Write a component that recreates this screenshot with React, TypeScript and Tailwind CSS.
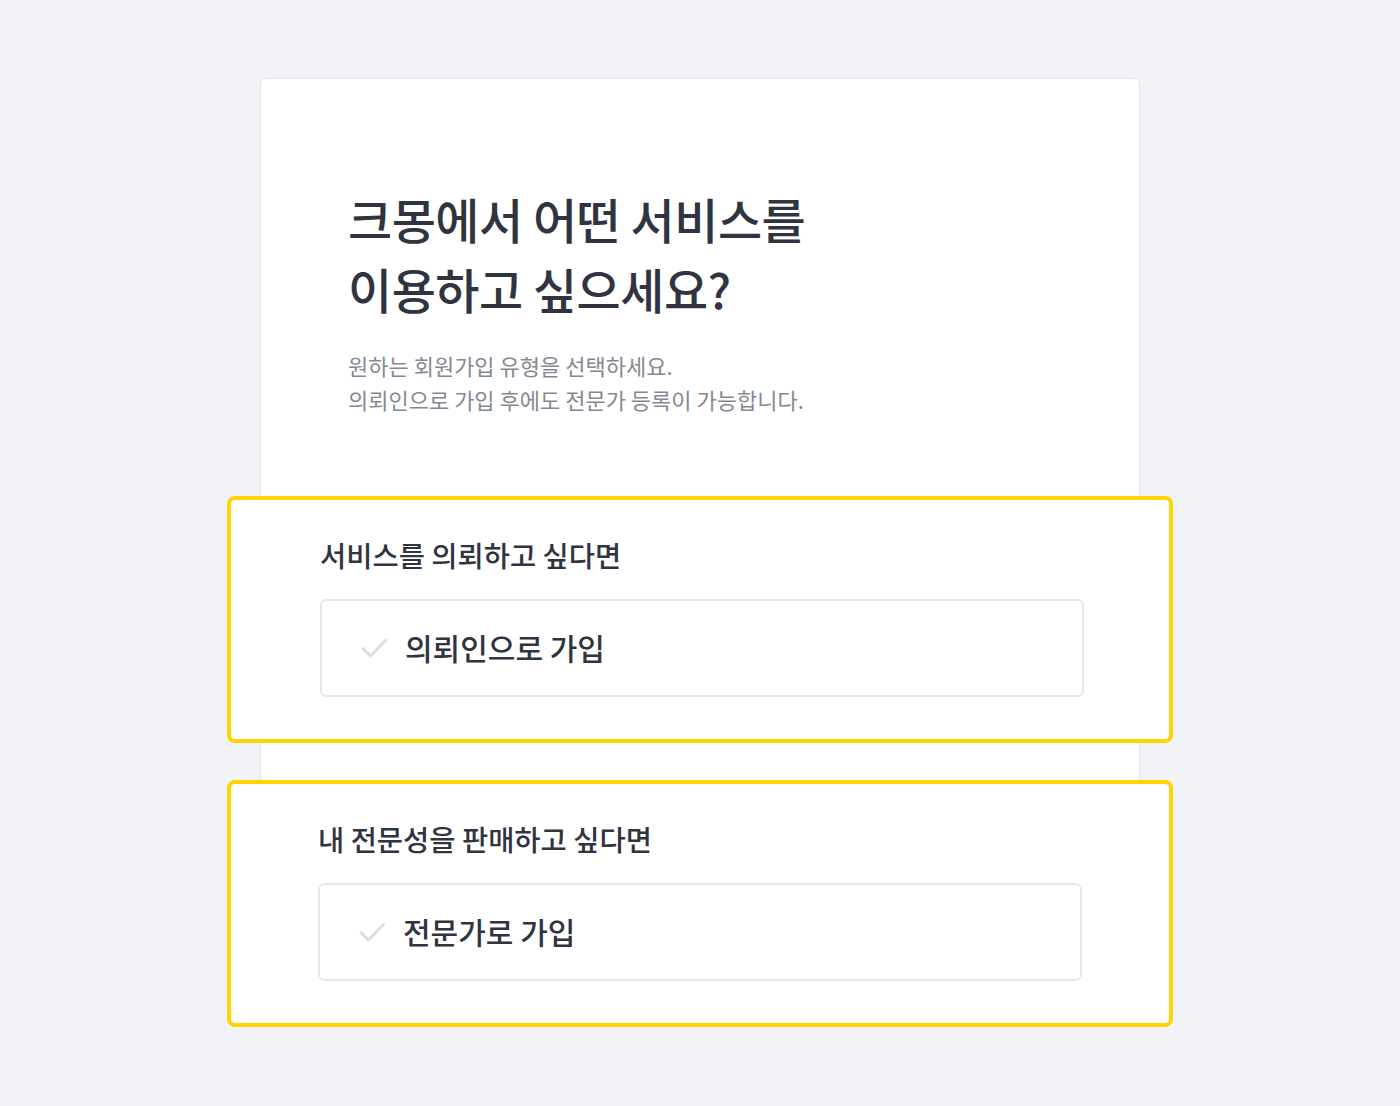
import React from "react";

function Check() {
  return (
    <svg width="28" height="28" viewBox="0 0 28 28" fill="none" className="shrink-0">
      <path d="M3 14.5 L10.5 22 L25.5 6.5" stroke="#dcdde5" strokeWidth="3" strokeLinecap="round" strokeLinejoin="round" />
    </svg>
  );
}

function Section({ label, button, shift }: { label: string; button: string; shift?: boolean }) {
  return (
    <div className="-mx-[121px] rounded-[8px] border-4 border-[#ffd400] bg-white pt-[36px] pb-[42px]">
      <div className={shift ? "ml-[87px] mr-[87px]" : "ml-[89px] mr-[85px]"}>
        <div className="text-[28.5px] leading-[38px] font-medium text-[#303441]">{label}</div>
        <div className="mt-[25px] h-[98px] rounded-[6px] border-2 border-[#e8e9ee] flex items-center pl-[38px] gap-[17px]">
          <Check />
          <span className="text-[30px] leading-[40px] font-medium text-[#303441] -translate-y-[1px]">{button}</span>
        </div>
      </div>
    </div>
  );
}

export default function App() {
  return (
    <div
      className="min-h-screen w-full bg-[#f2f3f7] pt-[78px] pb-[79px]"
      style={{ fontFamily: '"Noto Sans CJK KR", "Noto Sans", sans-serif' }}
    >
      <div className="mx-auto w-[880px] rounded-[6px] border border-[#e4e5eb] bg-white pt-[104px] px-[87px]">
        <h1 className="text-[48px] leading-[70px] font-medium text-[#303441] tracking-[-0.5px]">
          크몽에서 어떤 서비스를
          <br />
          이용하고 싶으세요?
        </h1>
        <p className="mt-[25px] text-[22px] leading-[34px] text-[#858893]">
          원하는 회원가입 유형을 선택하세요.
          <br />
          의뢰인으로 가입 후에도 전문가 등록이 가능합니다.
        </p>
        <div className="mt-[80px] flex flex-col gap-[37px] -mb-[30px]">
          <Section label="서비스를 의뢰하고 싶다면" button="의뢰인으로 가입" />
          <Section label="내 전문성을 판매하고 싶다면" button="전문가로 가입" shift />
        </div>
      </div>
    </div>
  );
}
